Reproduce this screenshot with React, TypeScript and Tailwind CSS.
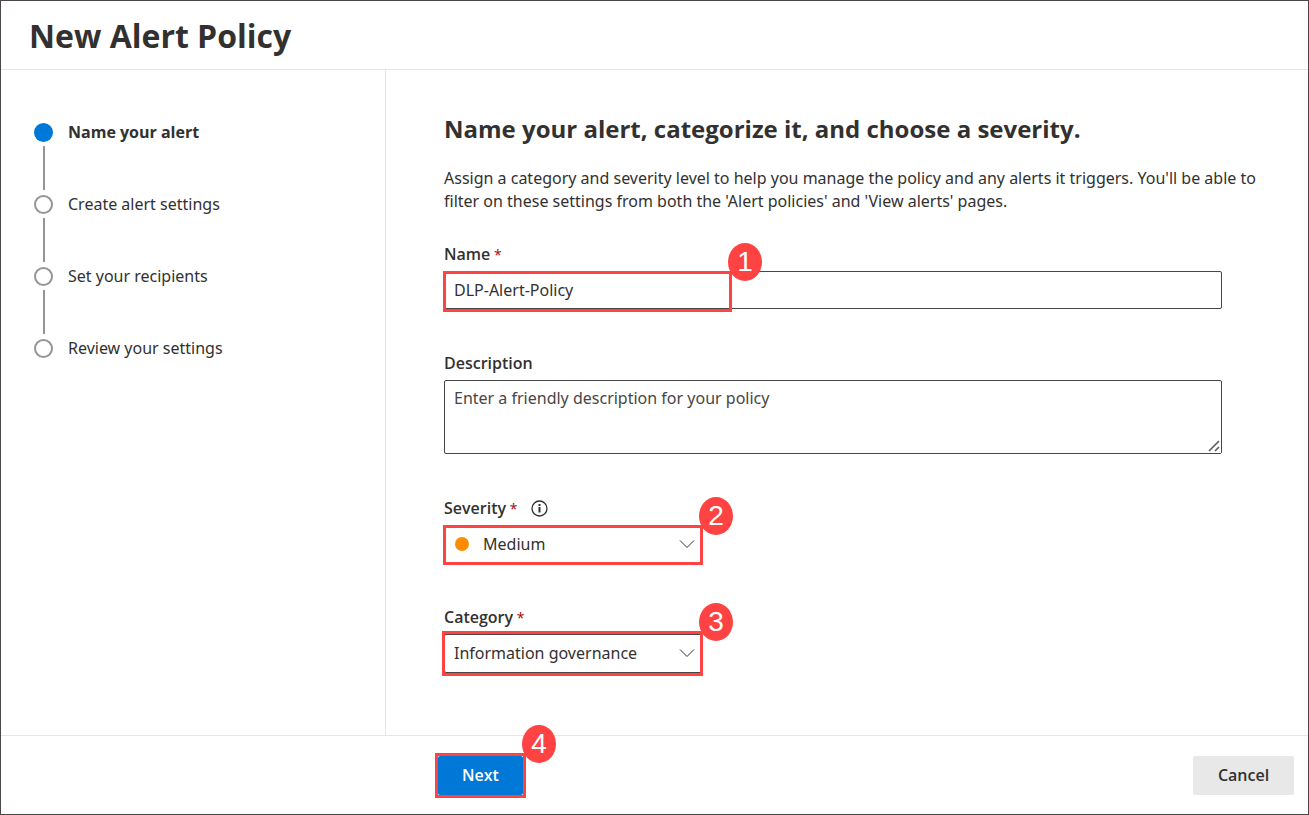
import { ReactNode } from 'react';

const steps = ['Name your alert', 'Create alert settings', 'Set your recipients', 'Review your settings'];

function Callout({ n, className }: { n: number; className: string }) {
  return (
    <div className={`pointer-events-none absolute border-3 border-[#ff4343] ${className}`}>
      <span className="absolute -top-[31px] -right-[33px] flex h-[38px] w-[34px] items-center justify-center rounded-[50%] bg-[#ff4343] font-['Liberation_Sans',sans-serif] text-[28px] leading-7 text-white">
        {n}
      </span>
    </div>
  );
}

function Chevron() {
  return (
    <svg className="pointer-events-none absolute top-[14px] right-[7px] h-[10px] w-4" viewBox="0 0 16 10" fill="none" stroke="#323130" strokeWidth="1">
      <path d="M1 1.5 8 8.5 15 1.5" />
    </svg>
  );
}

function Label({ htmlFor, required, children }: { htmlFor: string; required?: boolean; children: ReactNode }) {
  return (
    <label htmlFor={htmlFor} className="font-['Open_Sans',sans-serif] text-base leading-6 font-semibold">
      {children}
      {required && <span className="text-sm font-normal text-[#a80000]"> *</span>}
    </label>
  );
}

export default function App() {
  return (
    <div className="flex min-h-screen flex-col border border-[#4b4648] bg-white font-['Noto_Sans',sans-serif] text-base text-[#323130]">
      <header className="flex h-[69px] shrink-0 items-center border-b border-[#e6e6e6] px-7">
        <h1 className="pt-0.5 font-['Open_Sans',sans-serif] text-[32px] leading-10 font-bold">New Alert Policy</h1>
      </header>

      <div className="flex flex-1">
        <nav aria-label="Steps" className="w-[385px] shrink-0 border-r border-[#e6e6e6] pt-[53px] pl-[33px]">
          <ol>
            {steps.map((step, i) => (
              <li key={step} aria-current={i === 0 ? 'step' : undefined} className="flex h-[72px] gap-[15px]">
                <div className="flex w-[19px] flex-col items-center gap-1">
                  <span className={i === 0 ? 'size-[19px] shrink-0 rounded-full bg-[#0078d7]' : 'size-[19px] shrink-0 rounded-full border-2 border-[#979593]'} />
                  {i < steps.length - 1 && <span className="h-11 w-[2px] bg-[#979593]" />}
                </div>
                <span className={i === 0 ? "font-['Open_Sans',sans-serif] leading-[18px] font-bold" : 'leading-[18px]'}>{step}</span>
              </li>
            ))}
          </ol>
        </nav>

        <main className="min-w-0 flex-1 pt-[43px] pr-[30px] pb-[62px] pl-[58px]">
          <h2 className="font-['Open_Sans',sans-serif] text-2xl leading-8 font-bold">Name your alert, categorize it, and choose a severity.</h2>
          <p className="mt-[22px] leading-[23px]">
            Assign a category and severity level to help you manage the policy and any alerts it triggers. You'll be able to filter on these
            settings from both the 'Alert policies' and 'View alerts' pages.
          </p>

          <form id="policy" className="mt-[29px] mr-14 flex flex-col gap-[42px]">
            <div className="flex flex-col gap-[5px]">
              <Label htmlFor="name" required>Name</Label>
              <div className="relative">
                <input id="name" defaultValue="DLP-Alert-Policy" className="block h-[38px] w-full rounded-xs border border-[#484644] px-[9px] outline-none" />
                <Callout n={1} className="top-0 -left-px h-[41px] w-[289px]" />
              </div>
            </div>

            <div className="flex flex-col gap-[5px]">
              <Label htmlFor="description">Description</Label>
              <div className="relative">
                <textarea
                  id="description"
                  placeholder="Enter a friendly description for your policy"
                  className="block h-[74px] w-full resize-y rounded-xs border border-[#484644] px-[9px] py-[5px] leading-6 outline-none placeholder:text-[#484644] [&::-webkit-resizer]:bg-white"
                />
                <svg className="pointer-events-none absolute right-[2px] bottom-[2px] size-3" viewBox="0 0 12 12" fill="none" stroke="#605e5c" strokeWidth="1.7">
                  <path d="M1 11 11 1M7 11 11 7" />
                </svg>
              </div>
            </div>

            <div className="flex flex-col gap-[5px]">
              <div className="flex items-center gap-[14px]">
                <Label htmlFor="severity" required>Severity</Label>
                <button type="button" aria-label="About severity">
                  <svg className="size-[17px]" viewBox="0 0 17 17" fill="none" stroke="#323130">
                    <circle cx="8.5" cy="8.5" r="7.5" strokeWidth="1.3" />
                    <path d="M8.5 7v5.5M8.5 4v2" strokeWidth="2" />
                  </svg>
                </button>
              </div>
              <div className="relative w-[258px]">
                <select id="severity" defaultValue="Medium" className="block h-[38px] w-full appearance-none rounded-xs border border-[#484644] bg-white pr-8 pl-[38px] outline-none">
                  <option>Low</option>
                  <option>Medium</option>
                  <option>High</option>
                </select>
                <span className="pointer-events-none absolute top-3 left-[11px] size-[14px] rounded-full bg-[#ff8c00]" />
                <Chevron />
                <Callout n={2} className="top-0 -right-px -left-px h-10" />
              </div>
            </div>

            <div className="flex flex-col gap-[5px]">
              <Label htmlFor="category" required>Category</Label>
              <div className="relative w-[258px]">
                <select id="category" defaultValue="Information governance" className="block h-[39px] w-full appearance-none rounded-xs border border-[#484644] bg-white pr-8 pb-0.5 pl-[9px] outline-none">
                  <option>Information governance</option>
                  <option>Threat management</option>
                </select>
                <Chevron />
                <Callout n={3} className="-top-[3px] -right-px -left-[2px] h-[45px]" />
              </div>
            </div>
          </form>
        </main>
      </div>

      <footer className="flex h-[79px] shrink-0 items-center justify-between border-t border-[#e6e6e6] pr-[14px] pl-[437px] font-['Open_Sans',sans-serif]">
        <div className="relative">
          <button type="submit" form="policy" className="block h-[39px] w-[85px] rounded-xs bg-[#0078d7] font-semibold text-white">Next</button>
          <Callout n={4} className="-inset-[3px]" />
        </div>
        <button type="button" className="h-[39px] w-[101px] rounded-xs bg-[#e8e8e8] font-semibold">Cancel</button>
      </footer>
    </div>
  );
}
